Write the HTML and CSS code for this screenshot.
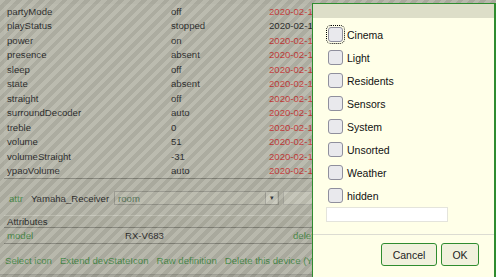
FILE: index.html
```html
<!DOCTYPE html>
<html lang="en">
<head>
    <meta charset="UTF-8">
    <title>FHEM - Yamaha_Receiver</title>
    <link rel="stylesheet" href="styles.css">
</head>
<body>
    <div class="page">
        <table class="readings">
            <tr><td class="name">partyMode</td><td class="val">off</td><td class="date">2020-02-1</td></tr>
            <tr><td class="name">playStatus</td><td class="val">stopped</td><td class="date old">2020-02-1</td></tr>
            <tr><td class="name">power</td><td class="val">on</td><td class="date">2020-02-1</td></tr>
            <tr><td class="name">presence</td><td class="val">absent</td><td class="date">2020-02-1</td></tr>
            <tr><td class="name">sleep</td><td class="val">off</td><td class="date">2020-02-1</td></tr>
            <tr><td class="name">state</td><td class="val">absent</td><td class="date">2020-02-1</td></tr>
            <tr><td class="name">straight</td><td class="val">off</td><td class="date">2020-02-1</td></tr>
            <tr><td class="name">surroundDecoder</td><td class="val">auto</td><td class="date">2020-02-1</td></tr>
            <tr><td class="name">treble</td><td class="val">0</td><td class="date">2020-02-1</td></tr>
            <tr><td class="name">volume</td><td class="val">51</td><td class="date">2020-02-1</td></tr>
            <tr><td class="name">volumeStraight</td><td class="val">-31</td><td class="date">2020-02-1</td></tr>
            <tr><td class="name">ypaoVolume</td><td class="val">auto</td><td class="date">2020-02-1</td></tr>
        </table>

        <div class="attr-row">
            <span class="link attr-cmd">attr</span>
            <span class="devname">Yamaha_Receiver</span>
            <div class="select">
                <span class="select-text">room</span>
                <span class="select-arrow">&#9662;</span>
            </div>
            <div class="attr-value"></div>
        </div>

        <table class="attributes">
            <colgroup>
                <col class="col-name">
                <col class="col-value">
                <col>
            </colgroup>
            <tr><th colspan="3">Attributes</th></tr>
            <tr><td class="link">model</td><td>RX-V683</td><td class="link">delet</td></tr>
        </table>

        <div class="links">
            <span class="link">Select icon</span>
            <span class="link">Extend devStateIcon</span>
            <span class="link">Raw definition</span>
            <span class="link">Delete this device (Ya</span>
        </div>
    </div>
    <div class="bottom-band"></div>

    <div class="overlay"></div>

    <div class="dialog">
        <div class="dialog-title"></div>
        <div class="dialog-body">
            <label class="room"><span class="cb focused"></span>Cinema</label>
            <label class="room"><span class="cb"></span>Light</label>
            <label class="room"><span class="cb"></span>Residents</label>
            <label class="room"><span class="cb"></span>Sensors</label>
            <label class="room"><span class="cb"></span>System</label>
            <label class="room"><span class="cb"></span>Unsorted</label>
            <label class="room"><span class="cb"></span>Weather</label>
            <label class="room"><span class="cb"></span>hidden</label>
            <div class="new-room"></div>
        </div>
        <div class="dialog-buttons">
            <button class="btn btn-cancel">Cancel</button>
            <button class="btn btn-ok">OK</button>
        </div>
    </div>
</body>
</html>
```

FILE: styles.css
```css
body {
    margin: 0;
    font-family: "Liberation Sans", Arial, sans-serif;
    background-color: #b3b3a6;
    overflow: hidden;
}
.page {
    width: 308px;
    overflow: hidden;
    padding: 4px 0 0 4px;
    font-size: 9.6px;
    color: #2c2c2c;
}
.link {
    color: #478847;
}
.readings {
    border-collapse: collapse;
    background-color: #b6b6a9;
    border-bottom: 1px solid #828278;
    width: 308px;
    table-layout: fixed;
}
.readings td {
    height: 14.5px;
    padding: 0 0 0 3px;
    white-space: nowrap;
    overflow: hidden;
}
.readings .name {
    width: 161px;
}
.readings .val {
    width: 95px;
}
.readings .date {
    color: #c43636;
}
.readings .date.old {
    color: #262626;
}
.attr-row {
    display: flex;
    align-items: center;
    padding-top: 12px;
    height: 14px;
}
.attr-cmd {
    margin-left: 5px;
    margin-right: 8px;
}
.devname {
    margin-right: 5px;
}
.select {
    box-sizing: border-box;
    flex: none;
    width: 165px;
    height: 14px;
    display: flex;
    align-items: center;
    border: 1px solid #94948a;
    background-color: #b8b8ab;
}
.select-text {
    flex: 1;
    padding-left: 3px;
    color: #567356;
}
.select-arrow {
    width: 11px;
    height: 12px;
    margin-right: 1px;
    background-color: #c8c8bb;
    border-left: 1px solid #a0a096;
    font-size: 7px;
    line-height: 12px;
    text-align: center;
    color: #333;
}
.attr-value {
    box-sizing: border-box;
    flex: none;
    width: 60px;
    height: 14px;
    margin-left: 4px;
    background-color: #c2c2b5;
    border: 1px solid #a6a69c;
}
.attributes {
    margin-top: 10px;
    border-collapse: collapse;
    width: 308px;
    table-layout: fixed;
    border-bottom: 1px solid #828278;
}
.attributes .col-name {
    width: 118px;
}
.attributes .col-value {
    width: 168px;
}
.attributes th {
    height: 11px;
    padding: 0 0 0 3px;
    text-align: left;
    font-weight: normal;
    border-top: 1px solid #c4c4b8;
    border-bottom: 1px solid #828278;
    background-color: #b0b0a3;
}
.attributes td {
    height: 15px;
    padding: 0 0 0 3px;
    white-space: nowrap;
    overflow: hidden;
}
.links {
    display: flex;
    padding: 9px 0 0 1px;
    height: 15px;
    align-items: center;
    white-space: nowrap;
}
.links .link {
    margin-right: 8px;
}
.bottom-band {
    margin-top: 6px;
    height: 6px;
    background-color: #a3a397;
    border-top: 1px solid #97978d;
}
.overlay {
    position: fixed;
    top: 0;
    left: 0;
    right: 0;
    bottom: 0;
    background: repeating-linear-gradient(135deg, rgba(255, 255, 255, 0.07) 0 4px, rgba(0, 0, 0, 0.05) 4px 8px);
}
.dialog {
    position: absolute;
    top: 3px;
    left: 312px;
    box-sizing: border-box;
    width: 184px;
    height: 290px;
    background-color: #ffffe8;
    border: 1px solid #2f8c2f;
    border-right-width: 2px;
    font-size: 10.5px;
    color: #111;
}
.dialog-title {
    height: 14px;
    background-color: #dddec8;
}
.dialog-body {
    padding: 5px 0 0 15px;
}
.room {
    display: flex;
    align-items: center;
    height: 23px;
}
.cb {
    box-sizing: border-box;
    width: 15px;
    height: 15px;
    margin-right: 4px;
    border: 1px solid #8f8f9d;
    border-radius: 3px;
    background-color: #e9e9ed;
}
.cb.focused {
    outline: 1px dotted #000;
    outline-offset: 1px;
}
.new-room {
    box-sizing: border-box;
    width: 122px;
    height: 15px;
    margin-left: -2px;
    background-color: #fff;
    border: 1px solid #e4e4dc;
}
.dialog-buttons {
    margin-top: 12px;
    border-top: 1px solid #dcdcd2;
    padding: 8px 15px 0 0;
    display: flex;
    justify-content: flex-end;
    gap: 4px;
}
.btn {
    box-sizing: border-box;
    height: 23px;
    padding: 0;
    border: 1px solid #2f8c2f;
    border-radius: 3px;
    background-color: #f1f1dd;
    font-family: "Liberation Sans", Arial, sans-serif;
    font-size: 10.5px;
    color: #222;
}
.btn-cancel {
    width: 56px;
}
.btn-ok {
    width: 38px;
}
```
